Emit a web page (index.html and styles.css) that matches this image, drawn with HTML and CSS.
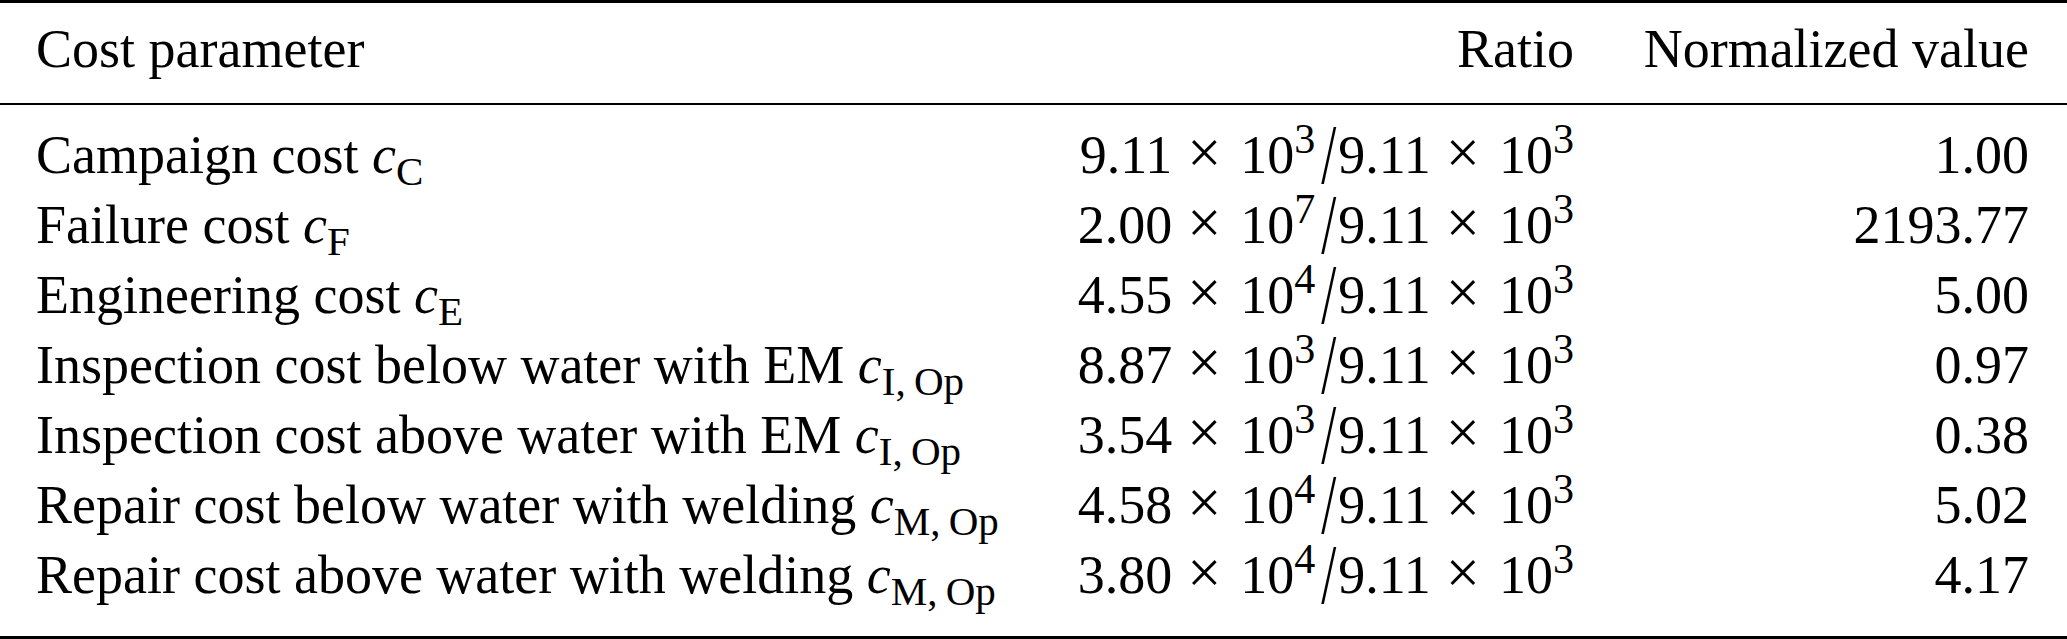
FILE: index.html
```html
<!DOCTYPE html>
<html lang="en">
<head>
<meta charset="utf-8">
<title>Cost parameters</title>
<link rel="stylesheet" href="styles.css">
</head>
<body>
<div class="table">
  <div class="row head">
    <div class="cell name">Cost parameter</div>
    <div class="cell num">Ratio</div>
    <div class="cell num">Normalized value</div>
  </div>
  <div class="body">
    <div class="row">
      <div class="cell name">Campaign cost <i>c</i><span class="sub">C</span></div>
      <div class="cell num">9.11<span class="op">×</span>10<span class="sup">3</span><span class="slash">/</span>9.11<span class="op">×</span>10<span class="sup">3</span></div>
      <div class="cell num">1.00</div>
    </div>
    <div class="row">
      <div class="cell name">Failure cost <i>c</i><span class="sub">F</span></div>
      <div class="cell num">2.00<span class="op">×</span>10<span class="sup">7</span><span class="slash">/</span>9.11<span class="op">×</span>10<span class="sup">3</span></div>
      <div class="cell num">2193.77</div>
    </div>
    <div class="row">
      <div class="cell name">Engineering cost <i>c</i><span class="sub">E</span></div>
      <div class="cell num">4.55<span class="op">×</span>10<span class="sup">4</span><span class="slash">/</span>9.11<span class="op">×</span>10<span class="sup">3</span></div>
      <div class="cell num">5.00</div>
    </div>
    <div class="row">
      <div class="cell name">Inspection cost below water with EM <i>c</i><span class="sub">I,&#8201;Op</span></div>
      <div class="cell num">8.87<span class="op">×</span>10<span class="sup">3</span><span class="slash">/</span>9.11<span class="op">×</span>10<span class="sup">3</span></div>
      <div class="cell num">0.97</div>
    </div>
    <div class="row">
      <div class="cell name">Inspection cost above water with EM <i>c</i><span class="sub">I,&#8201;Op</span></div>
      <div class="cell num">3.54<span class="op">×</span>10<span class="sup">3</span><span class="slash">/</span>9.11<span class="op">×</span>10<span class="sup">3</span></div>
      <div class="cell num">0.38</div>
    </div>
    <div class="row">
      <div class="cell name">Repair cost below water with welding <i>c</i><span class="sub">M,&#8201;Op</span></div>
      <div class="cell num">4.58<span class="op">×</span>10<span class="sup">4</span><span class="slash">/</span>9.11<span class="op">×</span>10<span class="sup">3</span></div>
      <div class="cell num">5.02</div>
    </div>
    <div class="row">
      <div class="cell name">Repair cost above water with welding <i>c</i><span class="sub">M,&#8201;Op</span></div>
      <div class="cell num">3.80<span class="op">×</span>10<span class="sup">4</span><span class="slash">/</span>9.11<span class="op">×</span>10<span class="sup">3</span></div>
      <div class="cell num">4.17</div>
    </div>
  </div>
</div>
</body>
</html>
```

FILE: styles.css
```css
html, body {
  margin: 0;
  padding: 0;
  background: #ffffff;
}

body {
  font-family: "Liberation Serif", "Times New Roman", serif;
  font-size: 54px;
  color: #000000;
}

.table {
  width: 2067px;
}

.row {
  display: grid;
  grid-template-columns: 1fr 520px 455px;
  padding: 0 38px 0 36px;
  line-height: 70px;
}

.head {
  border-top: 3px solid #000;
  border-bottom: 2px solid #000;
  padding-top: 11px;
  padding-bottom: 19px;
}

.body {
  border-bottom: 3px solid #000;
  padding-top: 15px;
  padding-bottom: 26px;
}

.cell {
  white-space: nowrap;
}

.num {
  text-align: right;
}

.name i {
  font-style: italic;
}

.sub {
  font-size: 0.76em;
  line-height: 0;
  vertical-align: -12px;
}

.sup {
  font-size: 0.78em;
  line-height: 0;
  vertical-align: 20px;
}

.op {
  display: inline-block;
  font-size: 1.12em;
  line-height: 0;
  padding: 0 19px 0 15px;
}

.slash {
  display: inline-block;
  line-height: 1;
  margin: 0 2px 0 6px;
  transform: scaleY(1.55);
}
```
